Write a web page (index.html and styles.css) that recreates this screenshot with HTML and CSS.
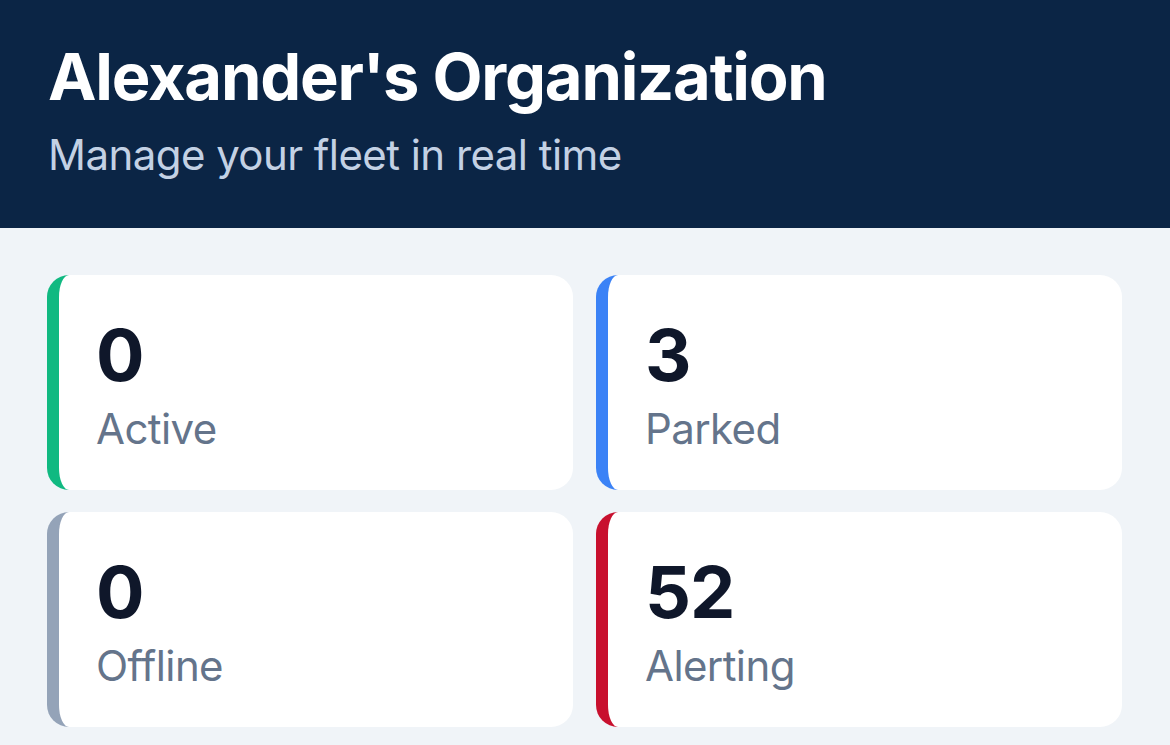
FILE: index.html
```html
<!DOCTYPE html>
<html lang="en">
<head>
  <meta charset="UTF-8">
  <meta name="viewport" content="width=device-width, initial-scale=1.0">
  <title>Fleet Overview</title>
  <link rel="stylesheet" href="styles.css">
</head>
<body>
  <header class="org-header">
    <h1 class="org-title">Alexander's Organization</h1>
    <p class="org-subtitle">Manage your fleet in real time</p>
  </header>

  <main class="stats">
    <div class="stat-card stat-active">
      <div class="stat-value">0</div>
      <div class="stat-label">Active</div>
    </div>
    <div class="stat-card stat-parked">
      <div class="stat-value">3</div>
      <div class="stat-label">Parked</div>
    </div>
    <div class="stat-card stat-offline">
      <div class="stat-value">0</div>
      <div class="stat-label">Offline</div>
    </div>
    <div class="stat-card stat-alerting">
      <div class="stat-value">52</div>
      <div class="stat-label">Alerting</div>
    </div>
  </main>
</body>
</html>
```

FILE: styles.css
```css
body { margin: 0; font-family: Inter, "Noto Sans", sans-serif; background: #f0f4f8; }

.org-header { background: #0b2545; padding: 37px 48px 48px; }
.org-title { margin: 0; color: #ffffff; font-size: 65px; font-weight: 700; line-height: 80px; letter-spacing: -1.2px; }
.org-subtitle { margin: 12px 0 0; color: #c3d1e4; font-size: 42px; font-weight: 400; line-height: 51px; letter-spacing: -0.55px; }

.stats { display: grid; grid-template-columns: 1fr 1fr; gap: 22px 23px; padding: 47px 48px 0 47px; }
.stat-card { background: #ffffff; border-radius: 22px; border-left: 12px solid #94a3b8; padding: 36px 36px 36px 37px; }
.stat-active { border-left-color: #10b981; }
.stat-parked { border-left-color: #3b82f6; }
.stat-offline { border-left-color: #94a3b8; }
.stat-alerting { border-left-color: #c8102e; }

.stat-value { color: #0f172a; font-size: 72px; font-weight: 700; line-height: 87px; letter-spacing: -1px; }
.stat-label { margin-top: 5px; color: #64748b; font-size: 42px; line-height: 51px; letter-spacing: -0.6px; }
```
